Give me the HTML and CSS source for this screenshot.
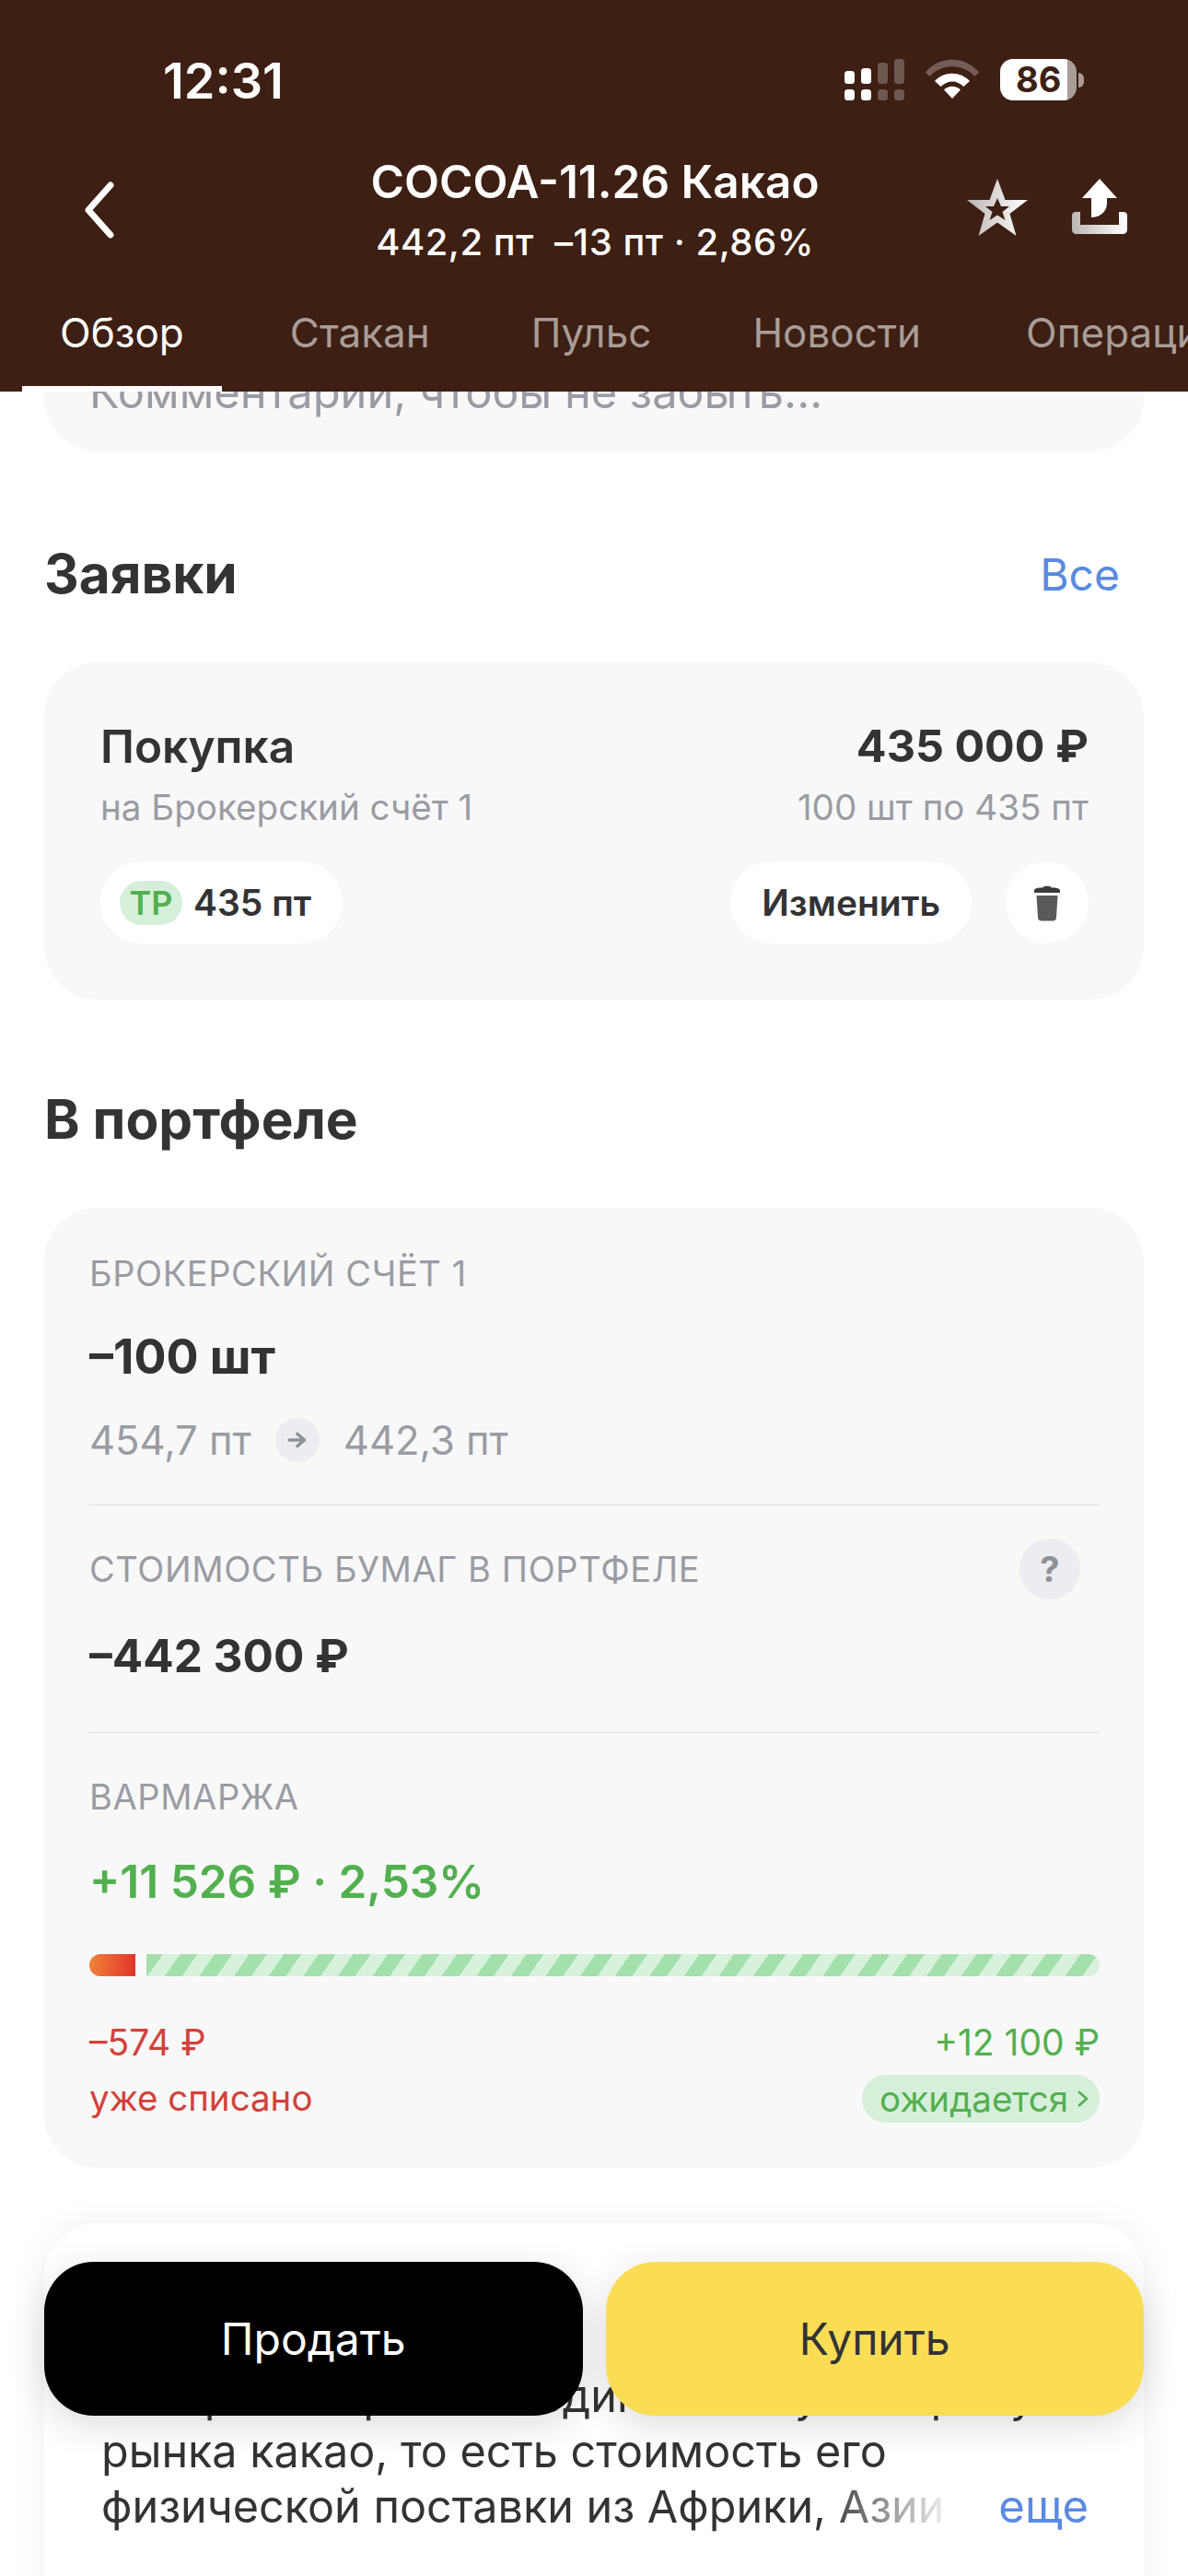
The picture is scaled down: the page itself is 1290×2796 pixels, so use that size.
FILE: index.html
```html
<!DOCTYPE html>
<html lang="ru">
<head>
    <meta charset="UTF-8">
    <meta name="viewport" content="width=device-width, initial-scale=1.0">
    <title>COCOA-11.26 Какао</title>
    <link rel="stylesheet" href="styles.css">
</head>
<body>
    <div class="screen">
        <header class="top">
            <div class="status-bar">
                <span class="clock">12:31</span>
                <div class="status-icons">
                    <svg class="signal" viewBox="0 0 65 45" width="65" height="45">
                        <rect x="0" y="13" width="11" height="14" rx="3.5" fill="#fff"/>
                        <rect x="18" y="10" width="11" height="17" rx="3.5" fill="#fff"/>
                        <rect x="36" y="4" width="11" height="23" rx="3.5" fill="#fff" opacity=".25"/>
                        <rect x="54" y="0" width="11" height="27" rx="3.5" fill="#fff" opacity=".25"/>
                        <rect x="0" y="33" width="11" height="12" rx="3.5" fill="#fff"/>
                        <rect x="18" y="33" width="11" height="12" rx="3.5" fill="#fff"/>
                        <rect x="36" y="33" width="11" height="12" rx="3.5" fill="#fff" opacity=".25"/>
                        <rect x="54" y="33" width="11" height="12" rx="3.5" fill="#fff" opacity=".25"/>
                    </svg>
                    <svg class="wifi" viewBox="0 0 58 43" width="58" height="43">
                        <path d="M0 14.5C15 -4 43 -4 58 14.5L53.5 19C40.5 4.500 17.500 4.500 4.500 19Z" fill="#fff" opacity=".28"/>
                        <path d="M10 24C20 13 38 13 48 24L41.500 30C34 22.500 24 22.500 16.500 30Z" fill="#fff"/>
                        <path d="M20 33.500C25 28.500 33 28.500 38 33.500L29 43Z" fill="#fff"/>
                    </svg>
                    <div class="battery">
                        <div class="battery-body">86</div>
                        <div class="battery-nub"></div>
                    </div>
                </div>
            </div>
            <div class="nav-bar">
                <svg class="back" viewBox="0 0 40 64" width="40" height="64">
                    <path d="M32 5L8 32L32 59" fill="none" stroke="#fff" stroke-width="7" stroke-linecap="round" stroke-linejoin="round"/>
                </svg>
                <div class="ticker">
                    <div class="ticker-name">COCOA-11.26 Какао</div>
                    <div class="ticker-price">442,2 пт&nbsp; –13 пт · 2,86%</div>
                </div>
                <div class="nav-actions">
                    <svg viewBox="0 0 66 62" width="66" height="62">
                        <defs>
                            <linearGradient id="shade" x1="0" y1="0" x2="1" y2="0">
                                <stop offset="0" stop-color="#bdb6b3"/>
                                <stop offset="1" stop-color="#fff"/>
                            </linearGradient>
                        </defs>
                        <path fill-rule="evenodd" fill="url(#shade)" d="M33 0L41.500 23H66L46.500 38L53.500 62L33 47.500L12.500 62L19.500 38L0 23H24.500ZM33 21L29 30H20L27.500 36L24.500 45L33 39.500L41.500 45L38.500 36L46 30H37Z"/>
                    </svg>
                    <svg viewBox="0 0 60 60" width="60" height="60">
                        <path fill="#fff" d="M30 0L49 21H38V27C38 33 33 42 21 42V21H11Z"/>
                        <path fill="url(#shade)" d="M0 40C0 37 2 36 4 36H9V50H51V36H56C58 36 60 37 60 40V55C60 58 58 60 55 60H5C2 60 0 58 0 55Z"/>
                    </svg>
                </div>
            </div>
            <nav class="tabs">
                <span class="tab tab-active">Обзор</span>
                <span class="tab">Стакан</span>
                <span class="tab">Пульс</span>
                <span class="tab">Новости</span>
                <span class="tab tab-last">Операции</span>
            </nav>
        </header>

        <main class="content">
            <div class="card comment-card">Комментарий, чтобы не забыть...</div>

            <div class="section-head orders-head">
                <h2>Заявки</h2>
                <span class="link-all">Все</span>
            </div>
            <section class="card order-card">
                <div class="order-row">
                    <span class="order-title">Покупка</span>
                    <span class="order-sum">435 000 ₽</span>
                </div>
                <div class="order-row order-sub">
                    <span>на Брокерский счёт 1</span>
                    <span>100 шт по 435 пт</span>
                </div>
                <div class="order-row order-actions">
                    <div class="pill">
                        <span class="tp-badge">ТР</span>
                        <span>435 пт</span>
                    </div>
                    <div class="order-buttons">
                        <div class="pill pill-edit">Изменить</div>
                        <div class="pill-round">
                            <svg viewBox="0 0 28 40" width="28" height="40">
                                <path fill="#3a3a3c" d="M9 3.500C10 1 18 1 19 3.500C23 3.500 28 4 28 6.500V9H0V6.500C0 4 5 3.500 9 3.500Z"/>
                                <path fill="#59595b" d="M2.500 12H25.500L24 36C24 38.500 22 39.500 20.500 39.500H7.500C6 39.500 4 38.500 4 36Z"/>
                            </svg>
                        </div>
                    </div>
                </div>
            </section>

            <div class="section-head portfolio-head">
                <h2>В портфеле</h2>
            </div>
            <section class="card portfolio-card">
                <div class="block-label first-label">БРОКЕРСКИЙ СЧЁТ 1</div>
                <div class="block-value qty">–100 шт</div>
                <div class="price-change">
                    <span>454,7 пт</span>
                    <span class="arrow-dot">
                        <svg viewBox="0 0 22 18" width="22" height="18">
                            <path d="M2 9H18M11 2.500L18.500 9L11 15.500" fill="none" stroke="#8f9299" stroke-width="3.600" stroke-linecap="round" stroke-linejoin="round"/>
                        </svg>
                    </span>
                    <span>442,3 пт</span>
                </div>
                <div class="divider divider-one"></div>
                <div class="label-row">
                    <span class="block-label">СТОИМОСТЬ БУМАГ В ПОРТФЕЛЕ</span>
                    <span class="help-dot">?</span>
                </div>
                <div class="block-value cost">–442 300 ₽</div>
                <div class="divider divider-two"></div>
                <div class="block-label margin-label">ВАРМАРЖА</div>
                <div class="block-value margin-value">+11 526 ₽ · 2,53%</div>
                <div class="margin-bar">
                    <div class="bar-loss"></div>
                    <div class="bar-gain"></div>
                </div>
                <div class="margin-foot">
                    <div class="foot-loss">
                        <div>–574 ₽</div>
                        <div class="foot-note">уже списано</div>
                    </div>
                    <div class="foot-gain">
                        <div>+12 100 ₽</div>
                        <div class="expected-pill">ожидается
                            <svg viewBox="0 0 12 18" width="12" height="18">
                                <path d="M2 2L10 9L2 16" fill="none" stroke="#52b04e" stroke-width="2.800" stroke-linecap="round" stroke-linejoin="round"/>
                            </svg>
                        </div>
                    </div>
                </div>
            </section>

            <section class="card about-card">
                <p class="about-text">Контракт отражает единственную мировую<br>рынка какао, то есть стоимость его<br>физической поставки из Африки, Азии</p>
                <span class="more-link">еще</span>
            </section>
        </main>

        <div class="trade-buttons">
            <div class="trade-btn btn-sell">Продать</div>
            <div class="trade-btn btn-buy">Купить</div>
        </div>
    </div>
</body>
</html>
```

FILE: styles.css
```css
* {
    margin: 0;
    padding: 0;
    box-sizing: border-box;
}

body {
    font-family: Inter, "Noto Sans", sans-serif;
    background-color: #fff;
    color: #333335;
}

.screen {
    position: relative;
    width: 1290px;
    height: 2796px;
    overflow: hidden;
    display: flex;
    flex-direction: column;
}

/* Header */
.top {
    height: 425px;
    flex: none;
    background-color: #3e1f13;
    color: #fff;
    display: flex;
    flex-direction: column;
}

.status-bar {
    height: 130px;
    padding: 60px 113px 0 177px;
    display: flex;
    justify-content: space-between;
    align-items: flex-start;
}

.clock {
    font-size: 54px;
    line-height: 56px;
    font-weight: 600;
}

.status-icons {
    display: flex;
    align-items: flex-start;
    padding-top: 4px;
}

.signal {
    margin-right: 23px;
}

.wifi {
    margin-right: 23px;
}

.battery {
    display: flex;
    align-items: center;
}

.battery-body {
    width: 83px;
    height: 45px;
    border-radius: 14px;
    background: linear-gradient(90deg, #fff 88%, #a89d98 88%);
    color: #3e1f13;
    font-size: 38px;
    line-height: 45px;
    font-weight: 700;
    padding-left: 17px;
}

.battery-nub {
    width: 6px;
    height: 16px;
    margin-left: 2px;
    border-radius: 0 6px 6px 0;
    background-color: #a89d98;
}

.nav-bar {
    height: 160px;
    padding: 0 66px 0 88px;
    display: flex;
    justify-content: space-between;
    align-items: center;
}

.back {
    margin-top: 36px;
}

.ticker {
    flex: 1;
    text-align: center;
    padding: 34px 0 0 114px;
}

.ticker-name {
    font-size: 49.5px;
    line-height: 60px;
    font-weight: 600;
}

.ticker-price {
    font-size: 40px;
    line-height: 50px;
    font-weight: 500;
    margin-top: 11px;
    letter-spacing: .5px;
}

.nav-actions {
    display: flex;
    align-items: flex-start;
    gap: 48px;
    padding-top: 30px;
}

.tabs {
    flex: 1;
    display: flex;
    gap: 28px;
    padding-left: 24px;
    overflow: hidden;
}

.tab {
    padding: 46px 41px 0;
    font-size: 44px;
    line-height: 50px;
    color: #a89d98;
    white-space: nowrap;
}

.tab-active {
    color: #fff;
    border-bottom: 6px solid #fff;
    margin-right: 5px;
}

.tab-last {
    margin-left: 4px;
}

/* Content */
.content {
    flex: 1;
    padding: 0 48px;
    overflow: hidden;
}

.card {
    background-color: #f8f8f9;
    border-radius: 58px;
}

.comment-card {
    height: 125px;
    margin-top: -60px;
    padding: 36px 0 0 49px;
    font-size: 48.8px;
    line-height: 50px;
    color: #9a9ca3;
}

.section-head {
    display: flex;
    justify-content: space-between;
    align-items: center;
    height: 72px;
    margin-bottom: 60px;
}

.section-head h2 {
    font-size: 58.5px;
    font-weight: 700;
    line-height: 72px;
}

.orders-head {
    margin-top: 97px;
}

.portfolio-head {
    margin-top: 94px;
}

.link-all {
    padding-right: 26px;
    font-size: 48px;
    color: #5a8ae0;
}

.order-card {
    height: 366px;
    padding: 61px 60px 0 61px;
}

.order-row {
    display: flex;
    justify-content: space-between;
    align-items: center;
}

.order-title {
    font-size: 49.5px;
    line-height: 60px;
    font-weight: 600;
}

.order-sum {
    font-size: 48.5px;
    line-height: 60px;
    font-weight: 700;
}

.order-sub {
    margin-top: 11px;
    font-size: 38.6px;
    line-height: 50px;
    color: #9a9ca3;
}

.order-actions {
    margin-top: 34px;
}

.order-buttons {
    display: flex;
    gap: 37px;
}

.pill {
    height: 89px;
    padding: 0 34px 0 21px;
    border-radius: 45px;
    background-color: #fff;
    display: flex;
    align-items: center;
    gap: 12px;
    font-size: 39px;
    font-weight: 600;
}

.pill-edit {
    padding: 0 34px;
}

.pill-round {
    width: 90px;
    height: 89px;
    border-radius: 50%;
    background-color: #fff;
    display: flex;
    justify-content: center;
    align-items: center;
}

.tp-badge {
    width: 68px;
    height: 48px;
    border-radius: 24px;
    background-color: #d5efda;
    color: #52b04e;
    font-size: 36px;
    line-height: 48px;
    text-align: center;
}

.portfolio-card {
    height: 1042px;
    padding: 48px 48px 0 49px;
}

.block-label {
    font-size: 38px;
    line-height: 46px;
    letter-spacing: .6px;
    color: #9a9ca3;
}

.block-value {
    font-size: 50px;
    line-height: 60px;
    font-weight: 700;
}

.qty {
    margin-top: 38px;
    font-size: 52px;
}

.price-change {
    margin-top: 36px;
    height: 48px;
    display: flex;
    align-items: center;
    gap: 26px;
    font-size: 43.5px;
    color: #9a9ca3;
}

.arrow-dot {
    width: 48px;
    height: 48px;
    border-radius: 50%;
    background-color: #ebedf0;
    display: flex;
    justify-content: center;
    align-items: center;
}

.divider {
    height: 1px;
    background-color: #dcdde0;
}

.divider-one {
    margin-top: 46px;
}

.divider-two {
    margin-top: 53px;
}

.label-row {
    margin-top: 36px;
    height: 66px;
    padding-right: 21px;
    display: flex;
    justify-content: space-between;
    align-items: center;
}

.help-dot {
    width: 66px;
    height: 66px;
    border-radius: 50%;
    background-color: #ebedf0;
    color: #8f9299;
    font-size: 38px;
    line-height: 66px;
    font-weight: 700;
    text-align: center;
}

.cost {
    margin-top: 31px;
    font-size: 49.5px;
}

.margin-label {
    margin-top: 46px;
}

.margin-value {
    margin-top: 39px;
    font-size: 49.5px;
    font-weight: 600;
    color: #52b04e;
}

.margin-bar {
    margin-top: 49px;
    height: 24px;
    display: flex;
    gap: 12px;
}

.bar-loss {
    width: 50px;
    border-radius: 12px 0 0 12px;
    background: linear-gradient(90deg, #f08238, #e0352c);
}

.bar-gain {
    flex: 1;
    border-radius: 0 12px 12px 0;
    background: repeating-linear-gradient(-55deg, #d8f1dc 0, #d8f1dc 15.4px, #a3e0ab 15.4px, #a3e0ab 30.8px);
}

.margin-foot {
    margin-top: 49px;
    display: flex;
    justify-content: space-between;
    font-size: 39px;
    line-height: 46px;
}

.foot-loss {
    color: #d1423a;
}

.foot-note {
    margin-top: 14px;
    font-size: 38.5px;
}

.foot-gain {
    color: #52b04e;
    display: flex;
    flex-direction: column;
    align-items: flex-end;
}

.expected-pill {
    margin-top: 12px;
    height: 52px;
    padding: 0 12px 0 19px;
    border-radius: 26px;
    background-color: #d5efda;
    display: flex;
    align-items: center;
    gap: 10px;
    font-size: 38.5px;
}

.about-card {
    position: relative;
    margin-top: 60px;
    height: 500px;
    padding: 158px 60px 0 62px;
    background-color: #fff;
    box-shadow: 0 0 40px rgba(0, 0, 0, 0.06);
}

.about-text {
    font-size: 48.5px;
    line-height: 60px;
    white-space: nowrap;
    overflow: hidden;
    color: #333335;
}

.more-link {
    position: absolute;
    right: 60px;
    top: 278px;
    padding-left: 190px;
    font-size: 49px;
    line-height: 60px;
    color: #5a8ae0;
    background: linear-gradient(90deg, rgba(255, 255, 255, 0), #fff 50%);
}

/* Buttons over the page */
.trade-buttons {
    position: absolute;
    left: 48px;
    right: 48px;
    top: 2455px;
    display: flex;
    gap: 25px;
}

.trade-btn {
    flex: 1;
    height: 167px;
    border-radius: 54px;
    display: flex;
    justify-content: center;
    align-items: center;
    font-size: 48px;
    box-shadow: 0 10px 40px rgba(0, 0, 0, 0.14);
}

.btn-sell {
    background-color: #000;
    color: #fff;
}

.btn-buy {
    background-color: #fadd55;
    color: #333335;
}
```
